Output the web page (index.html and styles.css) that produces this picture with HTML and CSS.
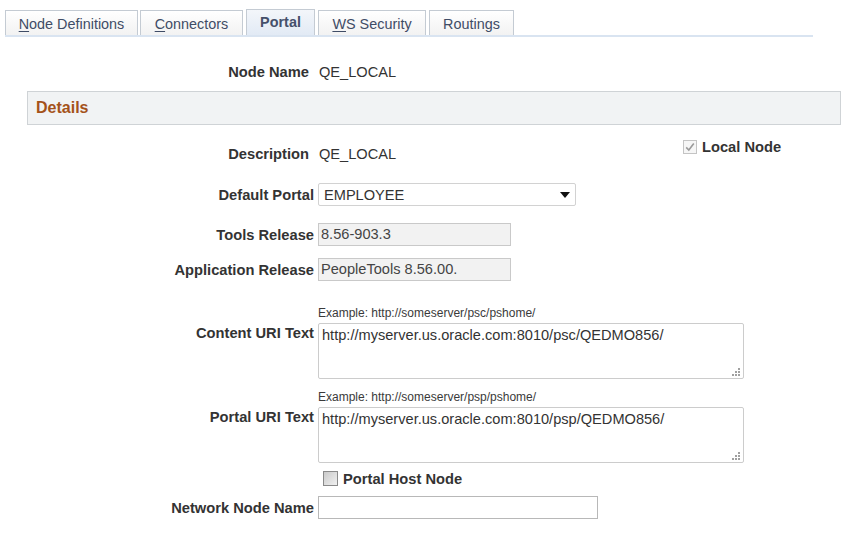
FILE: index.html
```html
<!DOCTYPE html>
<html>
<head>
<meta charset="utf-8">
<link rel="stylesheet" href="styles.css">
</head>
<body>
<div class="page">
  <div class="tabs">
    <div class="tab t1"><u>N</u>ode Definitions</div>
    <div class="tab t2"><u>C</u>onnectors</div>
    <div class="tab t3 active">Portal</div>
    <div class="tab t4"><u>W</u>S Security</div>
    <div class="tab t5">Routings</div>
  </div>

  <div class="row row-node">
    <div class="label label-ro">Node Name</div>
    <div class="value">QE_LOCAL</div>
  </div>

  <div class="section">Details</div>

  <div class="row row-desc">
    <div class="label label-ro">Description</div>
    <div class="value">QE_LOCAL</div>
    <div class="check local">
      <svg class="cb" width="14" height="14" viewBox="0 0 14 14"><rect x="0.5" y="0.5" width="13" height="13" fill="#f6f6f6" stroke="#c4c4c4"/><path d="M3.2 7.4 L5.8 10 L10.8 3.4" fill="none" stroke="#9a9a9a" stroke-width="1.6"/></svg>
      <span class="check-label">Local Node</span>
    </div>
  </div>

  <div class="row row-portal">
    <div class="label">Default Portal</div>
    <div class="select-wrap">
      <select class="select"><option>EMPLOYEE</option></select>
      <svg class="arrow" width="10" height="6" viewBox="0 0 10 6"><path d="M0 0 H10 L5 6 Z" fill="#111"/></svg>
    </div>
  </div>

  <div class="row row-tools">
    <div class="label">Tools Release</div>
    <div class="ro-field w193">8.56-903.3</div>
  </div>

  <div class="row row-app">
    <div class="label">Application Release</div>
    <div class="ro-field w193">PeopleTools 8.56.00.</div>
  </div>

  <div class="row row-example">
    <div></div>
    <div class="example">Example: http://someserver/psc/pshome/</div>
  </div>

  <div class="row row-uri">
    <div class="label label-top">Content URI Text</div>
    <div class="ta-wrap">
      <textarea class="ta">http://myserver.us.oracle.com:8010/psc/QEDMO856/</textarea>
      <svg class="grip" width="9" height="9" viewBox="0 0 9 9" fill="#a0a0a0"><rect x="6" y="0" width="2" height="2"/><rect x="3" y="3" width="2" height="2"/><rect x="6" y="3" width="2" height="2"/><rect x="0" y="6" width="2" height="2"/><rect x="3" y="6" width="2" height="2"/><rect x="6" y="6" width="2" height="2"/></svg>
    </div>
  </div>

  <div class="row row-example2">
    <div></div>
    <div class="example">Example: http://someserver/psp/pshome/</div>
  </div>

  <div class="row row-uri">
    <div class="label label-top">Portal URI Text</div>
    <div class="ta-wrap">
      <textarea class="ta">http://myserver.us.oracle.com:8010/psp/QEDMO856/</textarea>
      <svg class="grip" width="9" height="9" viewBox="0 0 9 9" fill="#a0a0a0"><rect x="6" y="0" width="2" height="2"/><rect x="3" y="3" width="2" height="2"/><rect x="6" y="3" width="2" height="2"/><rect x="0" y="6" width="2" height="2"/><rect x="3" y="6" width="2" height="2"/><rect x="6" y="6" width="2" height="2"/></svg>
    </div>
  </div>

  <div class="row row-host">
    <div></div>
    <div class="check host">
      <svg class="cb" width="15" height="15" viewBox="0 0 15 15"><defs><linearGradient id="g" x1="0" y1="0" x2="1" y2="1"><stop offset="0" stop-color="#c8c8c8"/><stop offset="1" stop-color="#f2f2f2"/></linearGradient></defs><rect x="0.5" y="0.5" width="14" height="14" fill="url(#g)" stroke="#8a8a8a"/></svg>
      <span class="check-label">Portal Host Node</span>
    </div>
  </div>

  <div class="row row-network">
    <div class="label">Network Node Name</div>
    <input class="text w280" type="text" value="">
  </div>
</div>
</body>
</html>
```

FILE: styles.css
```css
html, body {
  margin: 0;
  padding: 0;
  background: #ffffff;
}

body {
  font-family: "Liberation Sans", Arial, sans-serif;
  font-size: 14.6px;
  color: #333333;
}

.page {
  width: 857px;
  height: 551px;
  overflow: hidden;
}

/* Tabs */
.tabs {
  display: flex;
  align-items: flex-end;
  gap: 3px;
  margin-left: 5px;
  width: 808px;
  height: 35px;
  border-bottom: 2px solid #d9e4f1;
}

.tab {
  box-sizing: border-box;
  height: 25px;
  padding: 1px 0 0;
  text-align: center;
  line-height: 24px;
  font-size: 14.4px;
  color: #3f4c66;
  border: 1px solid #c4cbd3;
  border-bottom: none;
  background: linear-gradient(#ffffff, #f2f2f2);
  white-space: nowrap;
}

.t1 { width: 133px; }
.t2 { width: 103px; margin-left: -1px; }
.t3 { width: 69px; }
.t4 { width: 108px; }
.t5 { width: 85px; }

.tab u {
  text-decoration-thickness: 1px;
  text-underline-offset: 2px;
}

.tab.active {
  height: 26px;
  padding-top: 0;
  font-weight: bold;
  color: #45506b;
  background: linear-gradient(#f3f6fa, #e2eaf5);
}

/* Rows */
.row {
  display: grid;
  grid-template-columns: 314px 1fr;
  column-gap: 4px;
  align-items: center;
  line-height: 16px;
}

.label {
  font-weight: bold;
  font-size: 14.7px;
  text-align: right;
  color: #333333;
  white-space: nowrap;
}

.label-ro { padding-right: 5px; }

.label-top {
  align-self: start;
  padding-top: 2px;
}

.value {
  padding-left: 1px;
}

.row-node { margin-top: 27px; }

.section {
  box-sizing: border-box;
  margin: 11px 0 0 27px;
  width: 814px;
  height: 34px;
  padding-left: 8px;
  line-height: 32px;
  font-size: 16px;
  font-weight: bold;
  color: #a4521a;
  background: #f1f3f4;
  border: 1px solid #cfd3d6;
}

.row-desc {
  margin-top: 21px;
  grid-template-columns: 314px 361px auto;
}

.check {
  display: flex;
  align-items: center;
  gap: 5px;
}

.check .cb { display: block; }

.check-label {
  font-weight: bold;
  font-size: 14.7px;
  color: #333333;
}

.local { margin-top: -14px; }
.local .cb { margin-bottom: 1px; }

.row-portal { margin-top: 21px; }

.select-wrap {
  position: relative;
  width: 258px;
  height: 23px;
}

.select {
  appearance: none;
  -webkit-appearance: none;
  box-sizing: border-box;
  width: 258px;
  height: 23px;
  margin: 0;
  padding: 0 0 0 5px;
  font-family: "Liberation Sans", Arial, sans-serif;
  font-size: 14.6px;
  color: #333333;
  background: #ffffff;
  border: 1px solid #d2d2d2;
  border-radius: 2px;
}

.arrow {
  position: absolute;
  right: 6px;
  top: 9px;
}

.ro-field {
  box-sizing: border-box;
  height: 23px;
  padding: 0 2px;
  line-height: 21px;
  background: #f2f2f2;
  border: 1px solid #c9c9c9;
  color: #444444;
}

.w193 { width: 193px; }

.row-tools { margin-top: 17px; }
.row-app { margin-top: 12px; }

.example {
  font-size: 12px;
  line-height: 14px;
  color: #3a3a3a;
}

.row-example { margin-top: 25px; }
.row-example2 { margin-top: 11px; }

.row-uri { margin-top: 3px; }

.ta-wrap {
  position: relative;
  width: 426px;
  height: 56px;
}

.ta {
  box-sizing: border-box;
  display: block;
  width: 426px;
  height: 56px;
  margin: 0;
  padding: 3px 3px;
  resize: none;
  font-family: "Liberation Sans", Arial, sans-serif;
  font-size: 14.6px;
  line-height: 16px;
  color: #333333;
  border: 1px solid #cccccc;
  border-radius: 2px;
  background: #ffffff;
}

.grip {
  position: absolute;
  right: 3px;
  bottom: 2px;
}

.row-host { margin-top: 8px; }
.host { padding-left: 5px; }
.host .cb { margin-top: -2px; }

.row-network { margin-top: 9px; }

.text {
  box-sizing: border-box;
  height: 23px;
  margin: 0;
  padding: 0 3px;
  font-family: "Liberation Sans", Arial, sans-serif;
  font-size: 14.6px;
  border: 1px solid #b8b8b8;
  background: #ffffff;
}

.w280 { width: 280px; }
```
